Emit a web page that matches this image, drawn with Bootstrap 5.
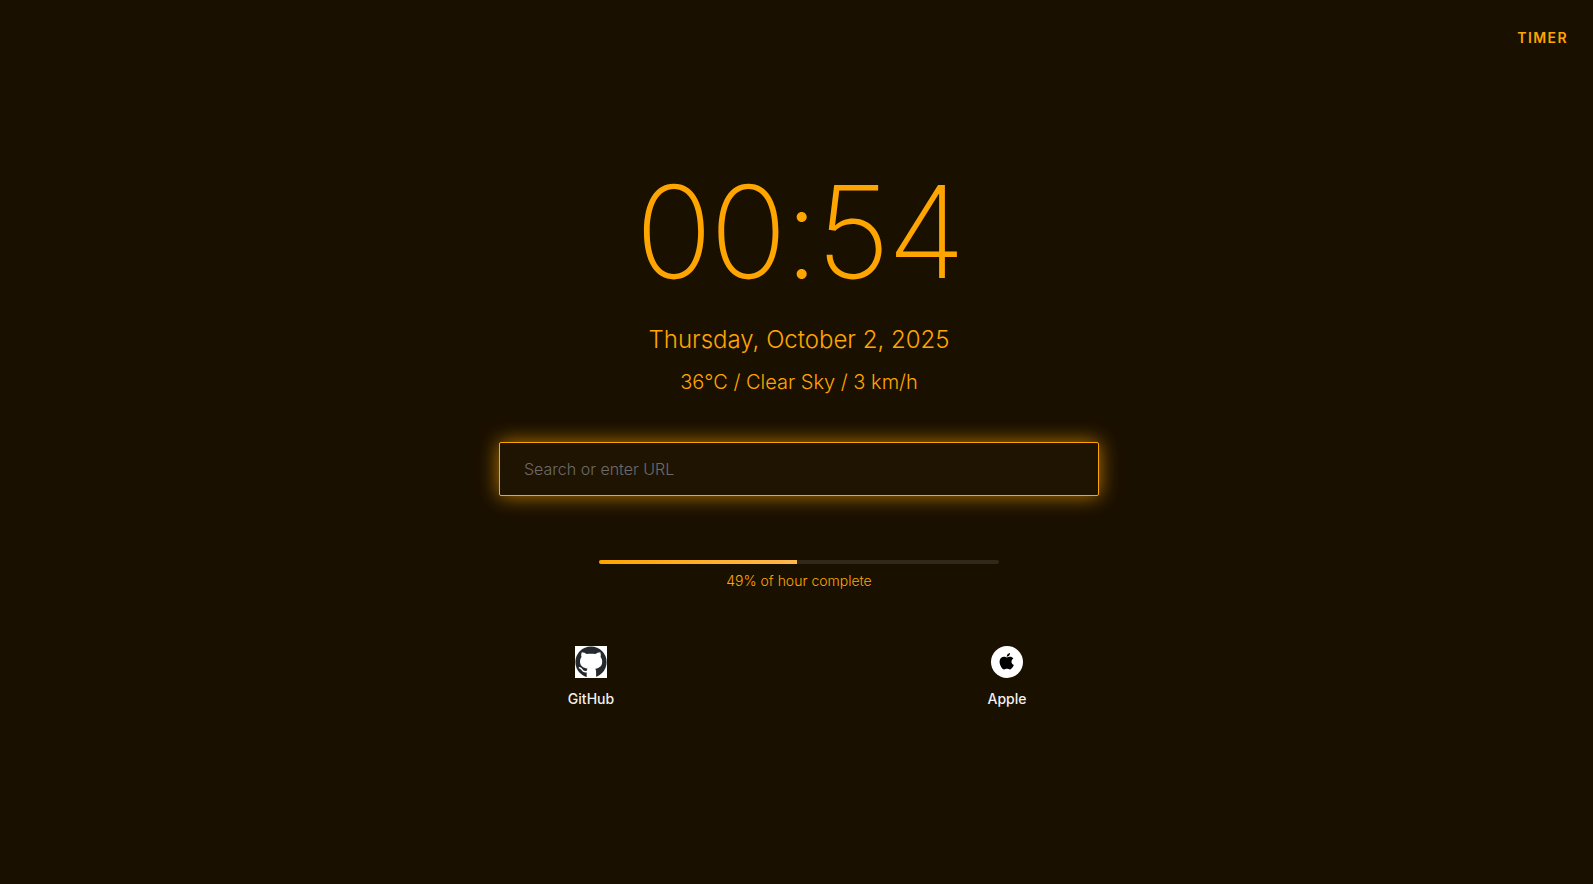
<!DOCTYPE html>
<html lang="en">
<head>
<meta charset="utf-8">
<meta name="viewport" content="width=device-width, initial-scale=1">
<title>New Tab</title>
<link href="https://cdn.jsdelivr.net/npm/bootstrap@5.3.0/dist/css/bootstrap.min.css" rel="stylesheet">
<style>
body{background:#1a1000;color:#ffa500;font-family:Inter,sans-serif}
.timer-btn,.timer-btn:hover{color:#ffa500;font-size:14px;font-weight:600;letter-spacing:.1em;line-height:20px;padding:4px 1px}
.start-page{padding:0 16px 60px 21px}
.clock{font-size:128px;font-weight:200;line-height:128px;letter-spacing:-3px;margin-bottom:26px}
.date-line{font-size:24px;line-height:36px;font-weight:300}
.weather{font-size:20px;line-height:32px;font-weight:300;margin-bottom:44px}
.search-form{width:100%;max-width:600px;margin-bottom:64px}
.search-box,.search-box:focus{height:54px;padding:0 24px;background:#1f1402;border:1px solid #ffa500;border-radius:2px;font-size:16px;font-weight:300;color:#fff;box-shadow:0 0 20px rgba(255,165,0,.7)}
.search-box::placeholder{color:#6c6b69}
.hour-meter{width:100%;max-width:400px;margin-bottom:56px}
.hour-track{height:4px;background:#31281a;border-radius:2px}
.hour-fill{background:linear-gradient(90deg,#ffa500,#ffb84d)}
.hour-label{font-size:14px;line-height:18px;font-weight:300}
.shortcuts{width:100%;max-width:816px}
.shortcut{color:#f0efed;font-size:14px;font-weight:500;line-height:18px;gap:12px}
</style>
</head>
<body class="min-vh-100 d-flex flex-column">
<header class="d-flex justify-content-end px-4 pt-4">
  <button class="btn border-0 timer-btn" type="button">TIMER</button>
</header>
<main class="start-page flex-grow-1 d-flex flex-column align-items-center justify-content-center text-center">
  <h1 class="clock">00:54</h1>
  <p class="date-line mb-2">Thursday, October 2, 2025</p>
  <p class="weather">36°C / Clear Sky / 3 km/h</p>
  <form class="search-form">
    <input class="form-control search-box" type="text" aria-label="Search or enter URL" placeholder="Search or enter URL">
  </form>
  <section class="hour-meter">
    <div class="progress hour-track" role="progressbar" aria-label="Hour progress" aria-valuenow="49" aria-valuemin="0" aria-valuemax="100">
      <div class="progress-bar hour-fill" style="width:49.5%"></div>
    </div>
    <p class="hour-label mt-2 mb-0">49% of hour complete</p>
  </section>
  <nav class="shortcuts">
    <div class="row gx-3">
      <div class="col-6 d-flex justify-content-center">
        <a class="shortcut d-flex flex-column align-items-center text-decoration-none" href="#github">
          <svg width="32" height="32" viewBox="0 0 32 32" aria-hidden="true">
            <rect width="32" height="32" fill="#fff"/>
            <circle cx="16" cy="16" r="15.600" fill="#24292e"/>
            <path fill="#fff" d="M6.800 6.200c1.800 0 3.700 1 5 1.900 2.600-.6 5.900-.6 8.500 0 1.300-.9 3.200-1.900 5-1.900.7 1.900.6 3.700.3 4.800 1.100 1.400 1.600 2.800 1.600 4.700 0 4.300-2.600 6.300-7 7 .5.700.9 1.600.9 3V32H11.700V25.700c0-1.400.3-2.300.9-3-4.800-.7-7.600-2.900-7.600-7.100 0-1.800.5-3.200 1.500-4.600-.4-1.300-.4-3.100.3-4.800z"/>
            <path fill="none" stroke="#fff" stroke-width="1.500" stroke-linecap="round" d="M4.500 21.800c2.300.5 2.300 2.500 3.800 3.300 1.200.7 2.800.6 4 .3"/>
          </svg>
          <span>GitHub</span>
        </a>
      </div>
      <div class="col-6 d-flex justify-content-center">
        <a class="shortcut d-flex flex-column align-items-center text-decoration-none" href="#apple">
          <svg width="32" height="32" viewBox="0 0 32 32" aria-hidden="true">
            <circle cx="16" cy="16" r="16" fill="#fff"/>
            <path transform="translate(9.300 6.800)" d="M9.700 0.100c.1 1-.3 2-.9 2.700-.6.7-1.500 1.200-2.400 1.100-.1-.9.400-1.900.9-2.500.6-.7 1.600-1.200 2.400-1.300zM13.600 12.200c-.4.900-.6 1.300-1.100 2.100-.7 1.100-1.700 2.400-2.900 2.400-1.100 0-1.400-.7-2.900-.7s-1.800.7-2.900.7c-1.200 0-2.100-1.200-2.800-2.300-2-3-2.200-6.500-1-8.400.9-1.300 2.200-2.100 3.500-2.100s2.100.7 3.200.7c1 0 1.700-.7 3.200-.7 1.100 0 2.300.6 3.200 1.700-2.800 1.500-2.300 5.500.5 6.600z"/>
          </svg>
          <span>Apple</span>
        </a>
      </div>
    </div>
  </nav>
</main>
<script src="https://cdn.jsdelivr.net/npm/bootstrap@5.3.0/dist/js/bootstrap.bundle.min.js"></script>
</body>
</html>
